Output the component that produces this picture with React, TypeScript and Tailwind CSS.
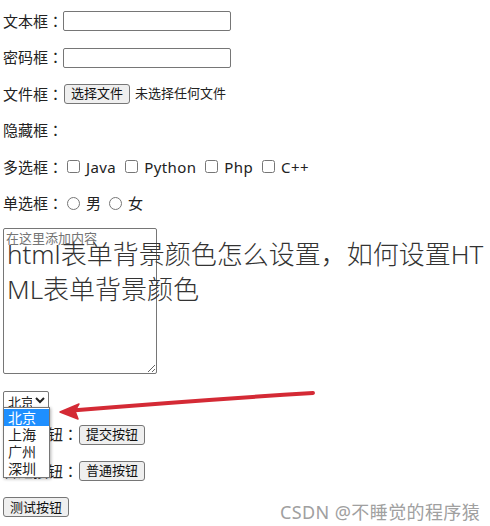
import React from "react";

const font = "font-['Noto_Sans','Noto_Sans_CJK_JP',sans-serif]";
const btn =
  "h-[20px] px-[6px] text-[13px] leading-none text-[#111] bg-[#efefef] border border-[#767676] rounded-[3px]";

function Row({ label, children }: { label: string; children?: React.ReactNode }) {
  return (
    <div className="h-[36.4px] flex items-center">
      <span>{label}</span>
      {children}
    </div>
  );
}

function Check({ label }: { label: string }) {
  return (
    <>
      <input type="checkbox" className="w-[13px] h-[13px] ml-[4px] mr-[6px]" />
      <span className="mr-[5px] tracking-[0.4px]">{label}</span>
    </>
  );
}

function Radio({ label }: { label: string }) {
  return (
    <>
      <input type="radio" name="sex" className="w-[13px] h-[13px] ml-[4px] mr-[6px]" />
      <span className="mr-[4px]">{label}</span>
    </>
  );
}

const cities = ["北京", "上海", "广州", "深圳"];

export default function App() {
  return (
    <div className={`relative w-[490px] h-[526px] overflow-hidden bg-white text-[15px] text-[#222] ${font}`}>
      <div className="flex flex-col pt-[3px] pl-[3px]">
        <Row label="文本框：">
          <input type="text" className="w-[168px] h-[20px] border border-[#767676] rounded-[2px]" />
        </Row>
        <Row label="密码框：">
          <input type="password" className="w-[168px] h-[20px] border border-[#767676] rounded-[2px]" />
        </Row>
        <Row label="文件框：">
          <button className={`${btn} ml-[1px]`}>选择文件</button>
          <span className="ml-[5px] text-[13px]">未选择任何文件</span>
        </Row>
        <Row label="隐藏框：" />
        <Row label="多选框：">
          <Check label="Java" />
          <Check label="Python" />
          <Check label="Php" />
          <Check label="C++" />
        </Row>
        <Row label="单选框：">
          <Radio label="男" />
          <Radio label="女" />
        </Row>
        <textarea
          placeholder="在这里添加内容"
          className="mt-[7px] w-[154px] h-[146px] border border-[#767676] rounded-[2px] p-[2px] text-[13px] leading-[15px] placeholder:text-[#757575]"
        />
        <div className="mt-[16px] h-[17px] mb-[9px]">
          <select className="h-[18px] w-[46px] text-[13px] border border-[#767676] rounded-[2px]">
            {cities.map((c) => (
              <option key={c}>{c}</option>
            ))}
          </select>
        </div>
        <Row label="提交按钮：">
          <button className={`${btn} ml-[1px]`}>提交按钮</button>
        </Row>
        <Row label="普通按钮：">
          <button className={`${btn} ml-[1px]`}>普通按钮</button>
        </Row>
        <div className="h-[36.4px] flex items-center">
          <button className={btn}>测试按钮</button>
        </div>
      </div>

      {/* open select list */}
      <div className="absolute left-[3px] top-[407px] w-[47px] h-[71px] bg-white border border-[#767676] shadow-[1px_1px_3px_rgba(0,0,0,0.3)] pt-[1px]">
        {cities.map((c, i) => (
          <div
            key={c}
            className={`h-[17px] pl-[4px] text-[14px] leading-[17px] ${i === 0 ? "bg-[#1e8fff] text-white" : "text-[#222]"}`}
          >
            {c}
          </div>
        ))}
      </div>

      {/* title overlay */}
      <div className="absolute left-[7px] top-[237px] w-[484px] text-[26px] leading-[35px] font-light text-[#333] font-['Noto_Sans','Noto_Sans_CJK_SC',sans-serif]">
        html表单背景颜色怎么设置，如何设置HT
        <br />
        ML表单背景颜色
      </div>

      {/* red arrow */}
      <svg className="absolute left-0 top-0" width="490" height="526" viewBox="0 0 490 526">
        <path d="M313 393 Q200 400 72 410.5" fill="none" stroke="#d42a35" strokeWidth="4" strokeLinecap="round" />
        <path d="M60 412 L79 404 L75 411 L78 419 Z" fill="#d42a35" stroke="#d42a35" strokeWidth="1.5" strokeLinejoin="round" />
      </svg>

      {/* watermark */}
      <div className="absolute left-[280px] top-[500px] text-[18px] leading-[24px] tracking-[0.4px] text-[#a0a0a0] font-['Noto_Sans','Noto_Sans_CJK_SC',sans-serif] [text-shadow:0_0_2px_#fff]">
        CSDN @不睡觉的程序猿
      </div>
    </div>
  );
}
